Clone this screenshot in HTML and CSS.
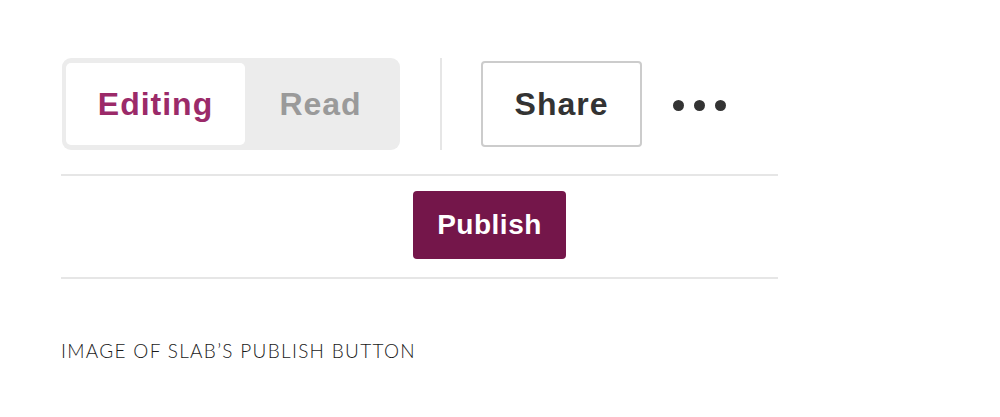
FILE: index.html
```html
<!DOCTYPE html>
<html>
<head>
<meta charset="utf-8">
<link rel="stylesheet" href="styles.css">
</head>
<body>
<div class="page">
  <div class="toolbar">
    <div class="segmented">
      <div class="seg seg-active">Editing</div>
      <div class="seg seg-inactive">Read</div>
    </div>
    <div class="vdivider"></div>
    <div class="share">Share</div>
    <div class="more"><span class="dot"></span><span class="dot"></span><span class="dot"></span></div>
  </div>
  <div class="hline"></div>
  <div class="publish-row">
    <div class="publish">Publish</div>
  </div>
  <div class="hline"></div>
  <p class="caption">Image of Slab’s Publish Button</p>
</div>
</body>
</html>
```
FILE: styles.css
```css
html, body {
  margin: 0;
  padding: 0;
  background: #ffffff;
}
.page {
  padding: 58px 0 0 61px;
  width: 717px;
  font-family: "Liberation Sans", Arial, sans-serif;
}
.toolbar {
  display: flex;
  align-items: center;
  height: 92px;
}
.segmented {
  display: flex;
  align-items: stretch;
  box-sizing: border-box;
  width: 338px;
  height: 92px;
  padding: 5px 4px;
  background: #ececec;
  border-radius: 9px;
  margin-left: 1px;
}
.seg {
  display: flex;
  align-items: center;
  justify-content: center;
  font-size: 32px;
  font-weight: bold;
  letter-spacing: 1px;
}
.seg-active {
  width: 179px;
  background: #ffffff;
  border-radius: 5px;
  color: #9b2a69;
}
.seg-inactive {
  flex: 1;
  color: #9a9a9a;
}
.vdivider {
  width: 2px;
  height: 92px;
  background: #e6e6e6;
  margin-left: 40px;
}
.share {
  box-sizing: border-box;
  width: 161px;
  height: 86px;
  margin-left: 39px;
  border: 2px solid #cccccc;
  border-radius: 4px;
  display: flex;
  align-items: center;
  justify-content: center;
  font-size: 32px;
  font-weight: bold;
  letter-spacing: 1px;
  color: #333333;
}
.more {
  display: flex;
  gap: 10px;
  margin-left: 31px;
  margin-top: 2px;
}
.dot {
  width: 11px;
  height: 11px;
  border-radius: 50%;
  background: #333333;
}
.hline {
  height: 2px;
  background: #e6e6e6;
}
.toolbar + .hline {
  margin-top: 24px;
}
.publish-row {
  display: flex;
  padding: 15px 0 18px 352px;
}
.publish {
  box-sizing: border-box;
  width: 153px;
  height: 68px;
  background: #74164a;
  border-radius: 4px;
  color: #ffffff;
  display: flex;
  align-items: center;
  justify-content: center;
  font-size: 28px;
  font-weight: bold;
  letter-spacing: 0.5px;
}
.caption {
  margin: 60px 0 0 0;
  font-family: Lato, "Open Sans", sans-serif;
  font-weight: 300;
  font-size: 19px;
  line-height: 24px;
  text-transform: uppercase;
  letter-spacing: 1.3px;
  color: #1a1a1a;
}
```
